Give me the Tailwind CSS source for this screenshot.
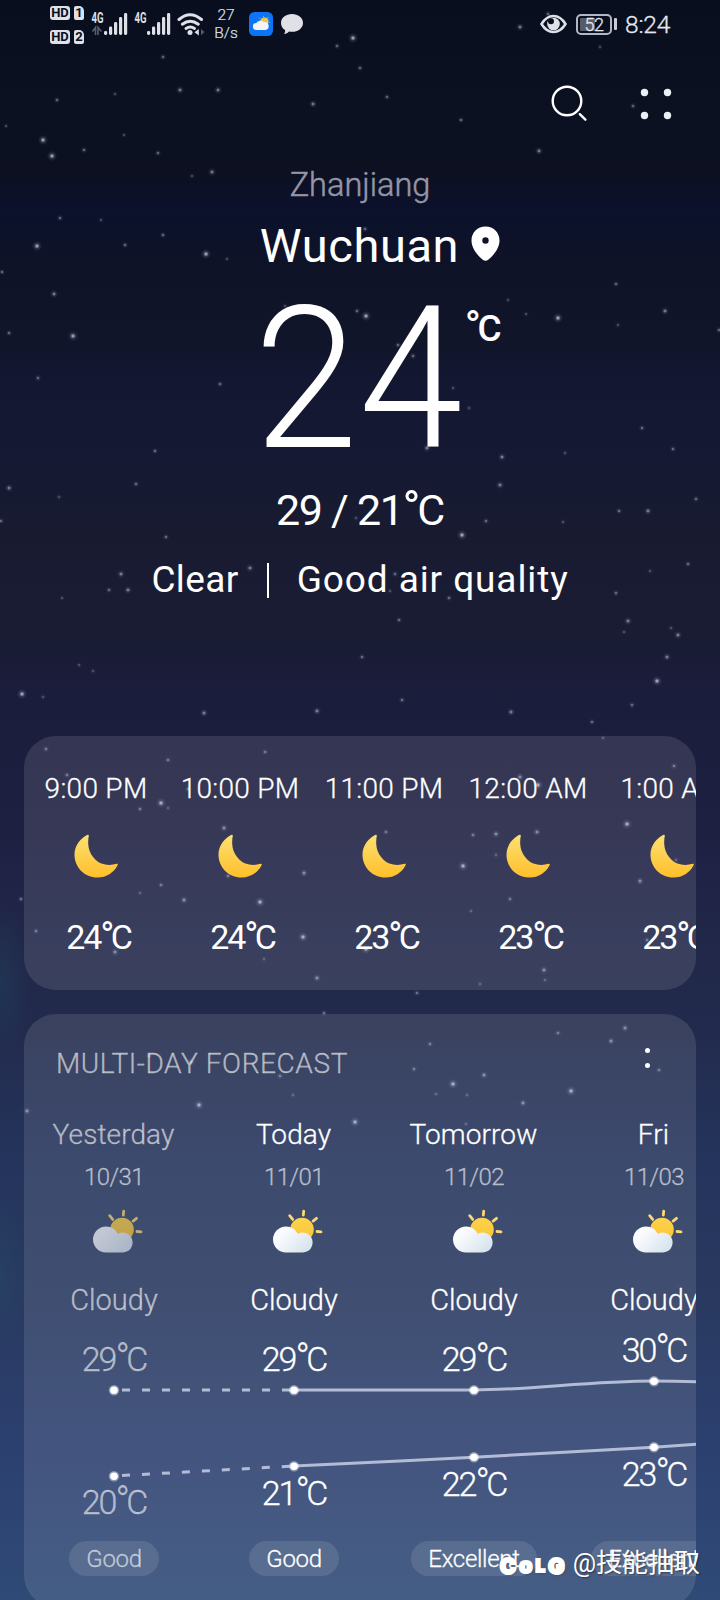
<!DOCTYPE html>
<html lang="en">
<head>
<meta charset="utf-8">
<title>Weather</title>
<script src="https://cdn.jsdelivr.net/npm/@tailwindcss/browser@4"></script>
</head>
<body class="bg-[#0a0f1e]">
<main class="relative flex h-[1600px] w-[720px] flex-col overflow-hidden bg-[linear-gradient(180deg,#090e1e_0px,#0b1120_110px,#0c1020_165px,#0c112c_210px,#0e1327_270px,#10152a_340px,#131732_380px,#151932_470px,#181b30_530px,#191c33_630px,#1b1d3c_700px,#1e2042_830px,#21284a_950px,#222b4d_1030px,#24345c_1160px,#293960_1300px,#2c4070_1450px,#2f4a76_1600px)] font-['Roboto',sans-serif] text-white">

  <!-- night sky -->
  <svg id="sky" class="absolute inset-0" width="720" height="1600" viewBox="0 0 720 1600">
    <defs>
      <radialGradient id="star"><stop offset="0" stop-color="#dfe3f5" stop-opacity=".95"/><stop offset=".28" stop-color="#c3c8e0" stop-opacity=".6"/><stop offset=".5" stop-color="#9aa0c0" stop-opacity=".22"/><stop offset="1" stop-color="#9aa0c0" stop-opacity="0"/></radialGradient>
      <radialGradient id="teal"><stop offset="0" stop-color="#1f6070" stop-opacity=".2"/><stop offset="1" stop-color="#1f6070" stop-opacity="0"/></radialGradient>
    </defs>
    <ellipse cx="0" cy="980" rx="30" ry="80" fill="url(#teal)"/>
    <ellipse cx="0" cy="1275" rx="30" ry="80" fill="url(#teal)"/>
  </svg>

  <!-- status bar -->
  <header class="relative flex h-[48px] shrink-0 items-center pl-[50px] pr-[49px]">
    <div class="flex w-[34px] flex-col gap-[10px] pt-[2px] text-[13px] leading-[14px] font-bold text-[#0a0f1e]">
      <div class="flex gap-[4px]"><span class="h-[14px] w-[20px] rounded-[3px] bg-[#dfe1e8] text-center">HD</span><span class="h-[14px] w-[10px] rounded-[2px] rounded-tr-[5px] bg-[#dfe1e8] text-center">1</span></div>
      <div class="flex gap-[4px]"><span class="h-[14px] w-[20px] rounded-[3px] bg-[#dfe1e8] text-center">HD</span><span class="h-[14px] w-[10px] rounded-[2px] rounded-tr-[5px] bg-[#dfe1e8] text-center">2</span></div>
    </div>
    <svg class="ml-[6px] overflow-visible" width="40" height="24" viewBox="90 12 40 24" fill="#dfe1e8">
      <text x="91.5" y="23" font-size="14" font-weight="700" textLength="12" lengthAdjust="spacingAndGlyphs">4G</text>
      <path d="M92.500 31.500l3-4v7.500M98 35v-7.500l3.500 4" fill="none" stroke="#5a5e6e" stroke-width="1.600"/>
      <rect x="104" y="31" width="3.200" height="4" rx="1.400"/><rect x="109" y="26.500" width="3.200" height="8.500" rx="1.400"/><rect x="114" y="22" width="3.200" height="13" rx="1.400"/><rect x="119" y="17" width="3.200" height="18" rx="1.400"/><rect x="124" y="13" width="3.200" height="22" rx="1.400"/>
    </svg>
    <svg class="ml-[3px] overflow-visible" width="40" height="24" viewBox="90 12 40 24" fill="#dfe1e8">
      <text x="91.500" y="23" font-size="14" font-weight="700" textLength="12" lengthAdjust="spacingAndGlyphs">4G</text>
      <rect x="104" y="31" width="3.200" height="4" rx="1.400"/><rect x="109" y="26.500" width="3.200" height="8.500" rx="1.400"/><rect x="114" y="22" width="3.200" height="13" rx="1.400"/><rect x="119" y="17" width="3.200" height="18" rx="1.400"/><rect x="124" y="13" width="3.200" height="22" rx="1.400"/>
    </svg>
    <svg class="ml-[4px]" width="28" height="24" viewBox="177 12 28 24">
      <g fill="none" stroke="#dfe1e8" stroke-width="3" stroke-linecap="round"><path d="M179 19.500q11-9.500 22.500 0"/><path d="M182.300 24.200q8-6 16 0"/><path d="M186 28.500q4.300-3 8.500 0"/></g>
      <circle cx="190" cy="32.500" r="2.500" fill="#dfe1e8"/><path d="M198.800 29v6.500l-4.300-3.200z" fill="#dfe1e8"/><path d="M201 29l3.500 3-3.500 3.200z" fill="#555a6a"/>
    </svg>
    <div class="ml-[6px] flex w-[30px] flex-col text-center text-[15.500px] leading-[18px] font-light text-[#dfe1e8] [-webkit-text-stroke:0.200px]"><span>27</span><span>B/s</span></div>
    <svg class="ml-[8px]" width="24" height="24" viewBox="0 0 24 24">
      <rect width="24" height="24" rx="5.500" fill="#0c74f5"/>
      <circle cx="15.500" cy="9.500" r="4" fill="#f0c748"/>
      <path d="M14.500 4.800V4M10.800 6.500L10 5.700M18.500 6l.7-.7M19.800 10.300h1" stroke="#f0c748" stroke-width="1"/>
      <path d="M7.500 18a3.500 3.500 0 0 1-.2-7 4.600 4.600 0 0 1 7.500-.8 3.900 3.900 0 0 1 1.700 7.800z" fill="#f3f5f8"/>
    </svg>
    <svg class="ml-[7px]" width="24" height="22" viewBox="0 0 24 22"><path d="M12 1c6 0 11 3.700 11 9s-5 8.800-11 8.800c-1 0-2-.1-3-.3-1.200 1.400-3 2.400-5 2.600 1-1.200 1.300-2.600 1-4C2.400 15.500 1 12.900 1 10c0-5.300 5-9 11-9z" fill="#e0e1e6"/></svg>

    <svg class="ml-auto" width="27" height="20" viewBox="0 0 27 20"><path d="M1.500 10C5 4.300 9 2 13.500 2S22 4.300 25.500 10C22 15.700 18 18 13.500 18S5 15.700 1.500 10z" fill="none" stroke="#dfe1e8" stroke-width="2.500"/><circle cx="13.500" cy="10" r="6.300" fill="#dfe1e8"/><circle cx="11" cy="7.300" r="3" fill="#0a0f1e"/></svg>
    <div class="ml-[9px] flex h-[21px] w-[36px] items-center rounded-[5px] border-[2px] border-[#b4b7c2] bg-[linear-gradient(90deg,#575b68_0_52%,transparent_52%)] bg-clip-content p-[2px] text-[18px] leading-[14px] font-light tracking-[-0.500px] text-[#e6e8ee] [-webkit-text-stroke:0.300px]"><span class="w-full pt-[2px] text-center">52</span></div>
    <span class="ml-[2px] h-[12px] w-[3px] rounded-[1px] bg-[#c9ccd6]"></span>
    <span class="ml-[8px] w-[46px] pt-[2px] text-[24.500px] leading-[28px] font-light tracking-[-0.200px] whitespace-nowrap text-[#e6e8ee] [-webkit-text-stroke:0.300px]">8:24</span>
  </header>

  <!-- toolbar -->
  <nav class="relative flex h-[108px] shrink-0 justify-end gap-[44px] pt-[34px] pr-[42px]">
    <svg width="44" height="44" viewBox="0 0 44 44" fill="none" stroke="#fff" stroke-width="2.400" stroke-linecap="round"><circle cx="21" cy="19" r="14.300"/><path d="M33.800 32.200l5.600 5.500"/></svg>
    <svg width="44" height="44" viewBox="0 0 44 44" fill="#eceef8"><circle cx="10.500" cy="10.500" r="3.700"/><circle cx="33.500" cy="10.500" r="3.700"/><circle cx="10.500" cy="33.500" r="3.700"/><circle cx="33.500" cy="33.500" r="3.700"/></svg>
  </nav>

  <!-- current conditions -->
  <section class="relative flex h-[580px] shrink-0 flex-col items-center">
    <p class="mt-[9px] text-[32.500px] leading-[40px] font-light text-[#9496a6] [-webkit-text-stroke:0.500px]">Zhanjiang</p>
    <div class="mt-[12px] ml-[40px] flex h-[58px] items-center gap-[12px]">
      <h1 class="text-[47px] leading-[58px] font-normal tracking-[0.600px]">Wuchuan</h1>
      <svg class="mb-[5px]" width="29" height="35" viewBox="0 0 29 35"><path fill-rule="evenodd" d="M14.500.5c8 0 14 6 14 14 0 7.500-5.500 14.500-11 19a4.700 4.700 0 0 1-6 0C6 29 .5 22 .5 14.500c0-8 6-14 14-14zm0 10.800a3.200 3.200 0 1 0 0 6.400 3.200 3.200 0 0 0 0-6.400z" fill="#fff"/></svg>
    </div>
    <div class="ml-[33px] flex h-[200px] items-start">
      <span class="w-[203px] shrink-0 origin-left scale-x-94 text-[199px] leading-[208px] font-light tracking-[1px] whitespace-nowrap">24</span>
      <span class="mt-[31px] ml-[8px] text-[37px] leading-[44px] font-medium tracking-[-2.500px]"><span class="-mr-[1px] text-[1.150em] leading-none">°</span>C</span>
    </div>
    <p class="mt-[7px] text-[43px] leading-[56px] tracking-[-1.300px]">29 / 21<span class="-mr-[2px] text-[1.120em] leading-none">°</span>C</p>
    <div class="mt-[18px] flex h-[48px] items-center text-[37px] leading-[48px]">
      <span class="tracking-[0.400px]">Clear</span><span class="mx-[28px] h-[35px] w-[2px] bg-white"></span><span class="tracking-[0.900px]">Good air quality</span>
    </div>
  </section>

  <!-- hourly forecast -->
  <section class="relative mx-[24px] h-[254px] shrink-0 overflow-hidden rounded-[32px] bg-white/11">
    <div id="hours" class="flex pl-[3px]"></div>
  </section>

  <!-- multi-day forecast -->
  <section class="relative mx-[24px] mt-[24px] h-[593px] shrink-0 overflow-hidden rounded-[32px] bg-white/11">
    <div class="flex h-[69px] items-start justify-between pt-[30px] pr-[46px] pl-[32px]">
      <h2 class="text-[28px] leading-[40px] font-light tracking-[0.600px] whitespace-nowrap text-white/58 [-webkit-text-stroke:0.300px]">MULTI-DAY FORECAST</h2>
      <div class="flex flex-col gap-[10px] pt-[4px]"><span class="size-[5px] rounded-full bg-white"></span><span class="size-[5px] rounded-full bg-white"></span></div>
    </div>
    <div id="days" class="flex pt-[32px]"></div>
    <svg class="absolute top-[306px] left-0" width="672" height="221" viewBox="24 1320 672 221" fill="none">
      <g stroke="#b3bcd6" stroke-width="3">
        <path d="M114 1390H294" stroke-dasharray="8 12" stroke-dashoffset="12"/>
        <path d="M114 1476L294 1466" stroke-dasharray="8 12" stroke-dashoffset="12"/>
        <path d="M294 1390H474C530 1390 590 1381 654 1381q30 0 60 1.500"/>
        <path d="M294 1466C354 1463.500 414 1460 474 1457.200S594 1450 654 1447.200L714 1443"/>
      </g>
      <g fill="#fff" stroke="#fff" stroke-opacity=".4" stroke-width="3">
        <circle cx="114" cy="1390.300" r="3.800"/><circle cx="294" cy="1390.300" r="3.800"/><circle cx="474" cy="1390.300" r="3.800"/><circle cx="654" cy="1381.300" r="3.800"/>
        <circle cx="114" cy="1476.300" r="3.800"/><circle cx="294" cy="1466.300" r="3.800"/><circle cx="474" cy="1457.300" r="3.800"/><circle cx="654" cy="1447.300" r="3.800"/>
      </g>
    </svg>
  </section>

  <!-- watermark -->
  <div class="absolute top-[1546px] right-[20px] flex h-[34px] items-center gap-[8px] whitespace-nowrap [text-shadow:1px_1px_2px_rgb(0_0_0/0.450)]">
    <span class="flex items-end gap-[3px] pt-[6px] font-['Inter'] text-[22px] leading-[20px] font-black [-webkit-text-stroke:2px_#fff]"><span>C</span><span class="text-[21px]">o</span><span class="text-[17px]">L</span><span>G</span></span>
    <span class="font-['Roboto','Noto_Sans_CJK_SC',sans-serif] text-[26px] leading-[34px] font-normal">@技能抽取</span>
  </div>
</main>

<svg width="0" height="0" class="absolute">
  <defs>
    <linearGradient id="moonFill" x1="0" y1="0" x2="0" y2="1"><stop offset="0" stop-color="#fde072"/><stop offset="1" stop-color="#ffbf2b"/></linearGradient>
    <linearGradient id="sunFill" x1="0" y1="0" x2="0" y2="1"><stop offset="0" stop-color="#fdd24e"/><stop offset="1" stop-color="#fcc42f"/></linearGradient>
    <linearGradient id="cloudFill" x1="0" y1="0" x2="1" y2=".6"><stop offset=".3" stop-color="#fafbfd"/><stop offset="1" stop-color="#d8e5ee"/></linearGradient>
  </defs>
</svg>

<script>
const stars = [
  [163,57],[115,94,0],[57,100],[180,90,1],[218,90,1],[313,104,1],[6,126,0],[43,140,2],[84,150],[52,156,2],[124,135,0],[158,153],[353,38,2],[337,46],[360,68],[520,27,1],[387,97],[461,120],[539,151,1],[633,106],[600,47,0],[548,14],
  [192,176,0],[212,172,1],[60,218],[101,220,0],[163,235],[37,246,2],[125,245],[206,254,2],[227,259,0],[2,272],[54,294,1],[9,333],[73,336,2],[38,378],[220,384],[155,451],[9,488,1],[136,484],[59,497,0],[1,521],[166,537],[121,574,1],[109,590],[128,590,1],[62,598,0],[250,568,1],[79,665,0],[93,671,0],[22,694,2],[43,697,0],[204,713,1],
  [616,284],[508,300,0],[526,314,0],[558,318,2],[665,311,1],[618,325,0],[719,330],[469,408,0],[642,428],[673,449],[502,457,1],[565,453,0],[500,485,1],[696,499],[619,511],[648,511,1],[486,521],[563,522,0],[462,535,2],[688,564],[650,571,0],[616,593],[628,621,1],[624,632,0],[671,628,0],[678,635,1],[667,657,1],[657,681,2],[632,705],[511,712,1],[592,722],
  [357,311],[366,316,2],[413,356],[398,345],[453,388,0],[427,448,1],[285,306,0],[365,229],[356,518,0],[395,574],[390,591,0],[449,598],[399,620],[317,711,1],[362,657],[402,700],
  [46,749],[168,760],[265,752],[67,775],[161,803,2],[140,809],[168,808,0],[188,789],[224,828,1],[228,876],[161,885],[140,893,0],[184,900,1],[260,902,2],[304,873,1],[36,931],[115,952,1],[303,937,2],[264,959,0],[317,978,1],[21,899],
  [603,738,0],[674,766],[520,777,1],[538,785,2],[627,824,2],[473,835],[496,834,1],[537,832,1],[386,832],[496,855,0],[463,866,2],[676,860,0],[640,881,1],[510,899],[471,911,0],[366,949,2],[647,940],[544,970,1],[545,980,0],[480,984,0],[417,993],
  [324,1013],[149,1056],[191,1062,1],[280,1076],[293,1095,0],[199,1105,2],[27,1111,1],[355,1122,2],[430,1044],[558,1033],[625,1028,1],[611,1041,1],[414,1069],[484,1075,1],[453,1084,2],[436,1094,0],[467,1095,0],[523,1103,1],[571,1091,2],[659,1070],[466,1124,0]
];
document.getElementById('sky').insertAdjacentHTML('beforeend', stars.map(([x, y, s]) => {
  const [r, o] = s === 2 ? [5.2, 0.9] : s === 1 ? [4.2, 0.7] : s === 0 ? [3.2, 0.42] : [3.4, 0.62];
  return `<circle cx="${x}" cy="${y}" r="${r}" opacity="${o}" fill="url(#star)"/>`;
}).join(''));

const deg = '<span class="-mr-[1.500px] text-[1.120em] leading-none">°</span>C';

const hours = [['9:00 PM', 24], ['10:00 PM', 24], ['11:00 PM', 23], ['12:00 AM', 23], ['1:00 AM', 23]];
document.getElementById('hours').innerHTML = hours.map(([t, c]) => `
  <div class="flex w-[144px] shrink-0 flex-col items-center pt-[33px]">
    <span class="-ml-[6px] text-[28px] leading-[40px] font-light tracking-[0.300px] whitespace-nowrap [-webkit-text-stroke:0.300px]">${t}</span>
    <svg class="mt-[25px] -ml-[6px]" width="44" height="44" viewBox="0 0 44 44"><path d="M13.600.8C7.500 3.500.5 11 .5 20.500.5 33.500 10.500 43.500 23.500 43.500c9 0 17-5.500 20.200-12.600.3-.9-.3-1.400-1.200-1.100-8 2.600-16.500.5-21.500-4.600C15.200 19.300 13 12 14.800 1.800c.1-1-.4-1.300-1.200-1z" fill="url(#moonFill)"/></svg>
    <span class="-ml-[1px] mt-[39px] h-[40px] text-[34px] leading-[40px] tracking-[-2.100px] whitespace-nowrap">${c}${deg}</span>
  </div>`).join('');

const days = [
  ['Yesterday', '10/31', 29, 20, 'Good', 'text-white/58', 'opacity-70', 'pt-[19px]', 'mt-[103px]'],
  ['Today', '11/01', 29, 21, 'Good', 'text-white', '', 'pt-[19px]', 'mt-[94px]'],
  ['Tomorrow', '11/02', 29, 22, 'Excellent', 'text-white', '', 'pt-[19px]', 'mt-[85px]'],
  ['Fri', '11/03', 30, 23, 'Excellent', 'text-white', '', 'pt-[10px]', 'mt-[84px]']
];
document.getElementById('days').innerHTML = days.map(([d, date, hi, lo, air, tone, fade, pt, mt]) => `
  <div class="flex w-[180px] shrink-0 flex-col items-center ${tone} [-webkit-text-stroke:0.300px]">
    <span class="-ml-[1px] text-[28px] leading-[40px] font-light tracking-[0.100px]">${d}</span>
    <span class="mt-[6px] text-[24px] leading-[32px] font-light tracking-[-0.600px] text-white/58">${date}</span>
    <svg class="mt-[16px] ${fade}" width="60" height="44" viewBox="0 0 60 44">
      <circle cx="38" cy="20.500" r="11.800" fill="url(#sunFill)"/>
      <path d="M39.700 2.200l-.4 4M25.700 6.700l3 3.700M52.500 9.300l-3.400 2.800M57 22.800l-4-.3" stroke="#fbd871" stroke-width="2.800" stroke-linecap="round"/>
      <path d="M22 43.500a13 13 0 0 1 0-26c5.500 0 9.500 3 11.700 7.300A10 10 0 1 1 39 43.500z" fill="url(#cloudFill)"/>
    </svg>
    <span class="mt-[27px] text-[29px] leading-[40px] font-light">Cloudy</span>
    <div class="flex h-[221px] flex-col items-center ${pt} text-[34px] leading-[40px] font-light tracking-[-2.100px] whitespace-nowrap"><span class="h-[40px]">${hi}${deg}</span><span class="h-[40px] ${mt}">${lo}${deg}</span></div>
    <span class="flex h-[35px] items-center rounded-full bg-white/11 px-[17px] pt-px text-[24px] leading-[35px] font-light tracking-[-0.300px]">${air}</span>
  </div>`).join('');
</script>
</body>
</html>
